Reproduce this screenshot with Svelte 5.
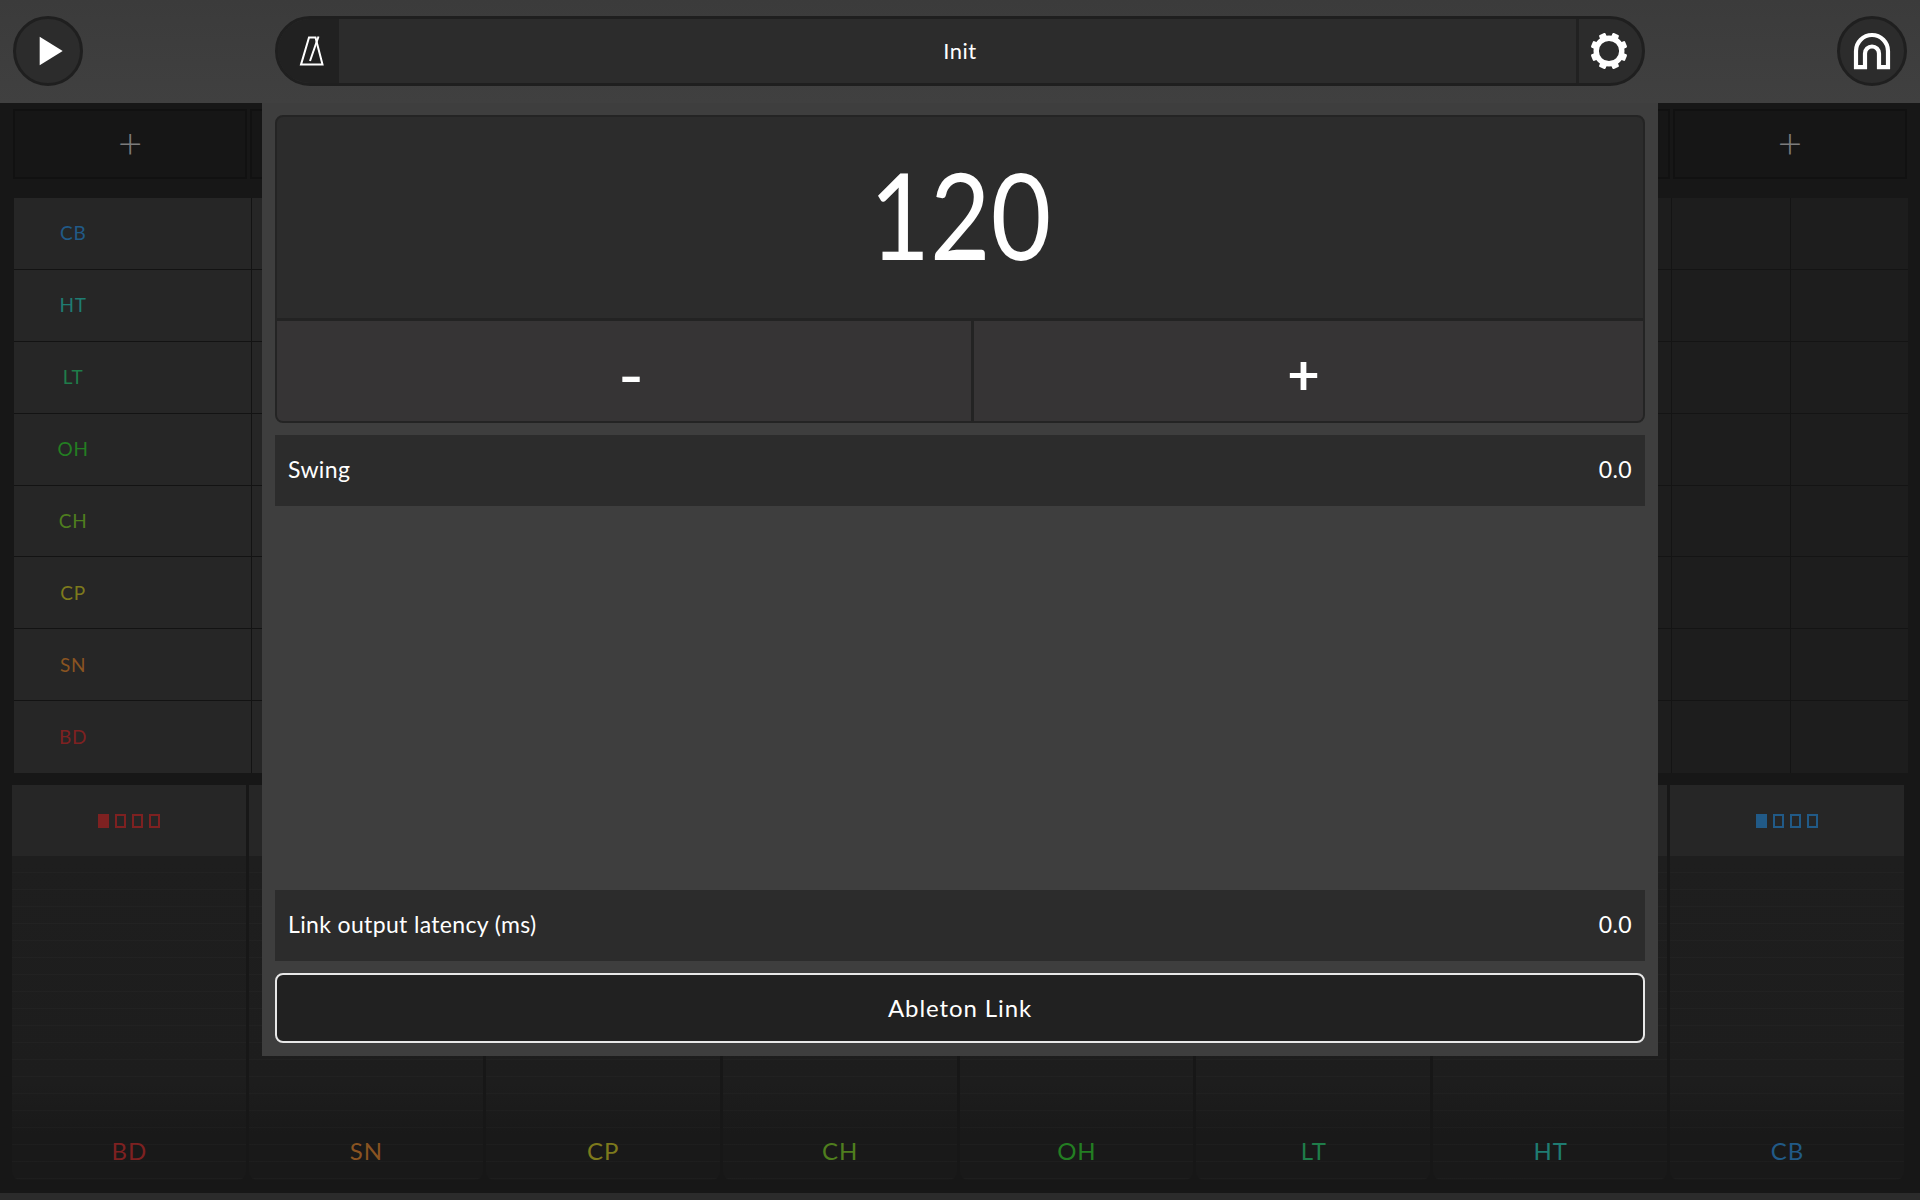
<script>
  const tracks = [
    { id: 'BD', color: '#7e2121' },
    { id: 'SN', color: '#8a5421' },
    { id: 'CP', color: '#7d7a1c' },
    { id: 'CH', color: '#4f7e1e' },
    { id: 'OH', color: '#237e22' },
    { id: 'LT', color: '#1f7d4a' },
    { id: 'HT', color: '#1f7c72' },
    { id: 'CB', color: '#215a87' }
  ];
  const rows = [...tracks].reverse();
  const steps = Array.from({ length: 14 }, (_, i) => i);
  const slots = [0, 1, 2, 3];
  const teeth = [22.5, 67.5, 112.5, 157.5, 202.5, 247.5, 292.5, 337.5];
</script>

<div class="app">
  <header class="header">
    <button class="round" aria-label="Play">
      <svg width="24" height="30" viewBox="0 0 24 30"><path d="M0.7 0.7 L23.7 15 L0.7 29.3 Z" fill="#fff" /></svg>
    </button>
    <div class="transport">
      <div class="metro">
        <svg width="26" height="32" viewBox="0 0 26 32" fill="none" stroke="#fff" stroke-width="2">
          <path d="M2 29.6 L10 2.5 H16.5 L23.5 29.6 Z" />
          <path d="M11 26 L19.5 1.5" />
        </svg>
      </div>
      <div class="title">Init</div>
      <div class="gear">
        <svg width="38" height="38" viewBox="-19 -19 38 38" fill="#fff">
          <circle r="12.8" fill="none" stroke="#fff" stroke-width="5.4" />
          {#each teeth as a}
            <rect x="-3.5" y="-18.4" width="7" height="6.4" rx="1.2" transform="rotate({a})" />
          {/each}
        </svg>
      </div>
    </div>
    <button class="round" aria-label="Logo">
      <svg width="38" height="38" viewBox="0 0 38 38" fill="none" stroke="#fff" stroke-width="4.2">
        <path d="M3 35.2 V19 A16 16 0 0 1 35 19 V35.2 H26 V21.5 A7 7 0 0 0 12 21.5 V35.2 Z" />
      </svg>
    </button>
  </header>

  <main class="main">
    <div class="adds">
      {#each tracks as t}
        <div class="add">+</div>
      {/each}
    </div>

    <div class="seq">
      {#each rows as r}
        <div class="label" style:color={r.color}>{r.id}</div>
        {#each steps as s}
          <div class="step" class:lit={s < 4}></div>
        {/each}
      {/each}
    </div>

    <div class="tracks">
      {#each tracks as t}
        <div class="track">
          <div class="pattern">
            {#each slots as s}
              <span class="slot" class:on={s === 0} style:color={t.color}></span>
            {/each}
          </div>
          <div class="pad" style:color={t.color}>{t.id}</div>
        </div>
      {/each}
    </div>
  </main>
  <div class="strip"></div>

  <section class="panel">
    <div class="tempo">
      <div class="bpm"><span class="digits">120</span></div>
      <div class="nudge">
        <div class="minus">-</div>
        <div class="plus">+</div>
      </div>
    </div>
    <div class="row"><span>Swing</span><span>0.0</span></div>
    <div class="spacer"></div>
    <div class="row"><span>Link output latency (ms)</span><span>0.0</span></div>
    <div class="link">Ableton Link</div>
  </section>
</div>

<style>
  :global(body) {
    margin: 0;
    background: #171717;
  }
  .app {
    position: relative;
    width: 1920px;
    height: 1200px;
    overflow: hidden;
    font-family: "Lato", "Open Sans", sans-serif;
    color: #fff;
  }
  .header {
    box-sizing: border-box;
    height: 103px;
    padding: 16px 13px;
    display: flex;
    gap: 192px;
    background: linear-gradient(#3b3b3b, #404040);
  }
  .round {
    box-sizing: border-box;
    width: 70px;
    height: 70px;
    padding: 0;
    border: 3px solid #1f1f1f;
    border-radius: 50%;
    background: #2c2c2c;
    display: flex;
    align-items: center;
    justify-content: center;
  }
  .round:first-child svg {
    margin-left: 6px;
  }
  .transport {
    box-sizing: border-box;
    width: 1370px;
    height: 70px;
    border: 3px solid #1f1f1f;
    border-radius: 35px;
    background: #2c2c2c;
    display: flex;
    overflow: hidden;
  }
  .metro {
    width: 61px;
    background: #212121;
    display: flex;
    align-items: center;
    justify-content: center;
    padding-left: 7px;
    box-sizing: border-box;
  }
  .title {
    flex: 1;
    padding: 0 0 2px 5px;
    display: flex;
    align-items: center;
    justify-content: center;
    font-size: 22px;
    letter-spacing: 0.5px;
  }
  .gear {
    box-sizing: border-box;
    width: 66px;
    border-left: 3px solid #212121;
    display: flex;
    align-items: center;
    justify-content: center;
    padding-right: 3px;
  }
  .main {
    box-sizing: border-box;
    height: 1090px;
    padding-top: 6px;
    background: #171717;
  }
  .adds {
    margin: 0 13px;
    display: grid;
    grid-template-columns: repeat(8, 1fr);
    gap: 3px;
  }
  .add {
    box-sizing: border-box;
    height: 70px;
    padding-bottom: 5px;
    border: 2px solid #111;
    background: #161616;
    color: #7c7c7c;
    font-size: 42px;
    font-weight: 300;
    display: flex;
    align-items: center;
    justify-content: center;
    line-height: 1;
  }
  .seq {
    margin: 19px 12px 0 14px;
    height: 575px;
    display: grid;
    grid-template-columns: repeat(16, 1fr);
    grid-template-rows: repeat(8, 1fr);
  }
  .label {
    grid-column: span 2;
    box-sizing: border-box;
    padding: 0 50% 1px 0;
    background: #262626;
    border-bottom: 1px solid #131313;
    display: flex;
    align-items: center;
    justify-content: center;
    font-size: 19px;
    letter-spacing: 0.8px;
  }
  .step {
    background: #1d1d1d;
    border-left: 1px solid #141414;
    border-bottom: 1px solid #141414;
  }
  .step.lit {
    background: #262626;
    border-left-color: #131313;
    border-bottom-color: #131313;
  }
  .seq > :nth-last-child(-n + 15) {
    border-bottom: 0;
  }
  .tracks {
    margin: 12px 16px 0 12px;
    display: grid;
    grid-template-columns: repeat(8, 1fr);
    gap: 3px;
  }
  .pattern {
    height: 71px;
    background: #262626;
    display: flex;
    align-items: center;
    justify-content: center;
    gap: 6px;
  }
  .slot {
    box-sizing: border-box;
    width: 11px;
    height: 14px;
    border: 2px solid currentColor;
  }
  .slot.on {
    background: currentColor;
  }
  .pad {
    box-sizing: border-box;
    height: 324px;
    padding: 0 0 15px 1px;
    border-radius: 0 0 8px 8px;
    background:
      repeating-linear-gradient(transparent 0 16px, rgba(255, 255, 255, 0.02) 16px 17px),
      linear-gradient(#1e1e1e, #1d1d1d 70%, #191919 86%);
    display: flex;
    align-items: flex-end;
    justify-content: center;
    font-size: 24px;
    letter-spacing: 1px;
  }
  .strip {
    height: 7px;
    background: #2b2b2b;
  }
  .panel {
    position: absolute;
    left: 262px;
    top: 103px;
    box-sizing: border-box;
    width: 1396px;
    height: 953px;
    padding: 12px 13px 13px;
    background: #3e3e3e;
    display: flex;
    flex-direction: column;
  }
  .tempo {
    box-sizing: border-box;
    height: 308px;
    border: 2px solid #242424;
    border-radius: 8px;
    overflow: hidden;
    background: #2c2c2c;
  }
  .bpm {
    box-sizing: border-box;
    height: 204px;
    padding-bottom: 8px;
    border-bottom: 3px solid #232323;
    display: flex;
    align-items: center;
    justify-content: center;
    font-size: 120px;
    line-height: 1;
  }
  .digits {
    display: inline-block;
    transform: scaleX(0.87);
  }
  .nudge {
    height: 100px;
    display: grid;
    grid-template-columns: 694px 1fr;
    background: #363435;
    line-height: 1;
  }
  .nudge > div {
    display: flex;
    align-items: center;
    justify-content: center;
  }
  .minus {
    padding: 3px 0 0 14px;
    font-size: 70px;
    font-weight: 400;
  }
  .plus {
    padding: 6px 10px 0 0;
    border-left: 3px solid #232323;
    font-size: 56px;
    font-weight: 700;
  }
  .row {
    box-sizing: border-box;
    height: 71px;
    margin-top: 12px;
    padding: 0 13px 3px;
    background: #2c2c2c;
    display: flex;
    align-items: center;
    justify-content: space-between;
    font-size: 23px;
    letter-spacing: 0.35px;
  }
  .spacer {
    flex: 1;
  }
  .link {
    box-sizing: border-box;
    height: 70px;
    margin-top: 12px;
    padding-bottom: 2px;
    border: 2px solid #e8e8e8;
    border-radius: 8px;
    background: #212121;
    display: flex;
    align-items: center;
    justify-content: center;
    font-size: 24px;
    letter-spacing: 0.9px;
  }
</style>
